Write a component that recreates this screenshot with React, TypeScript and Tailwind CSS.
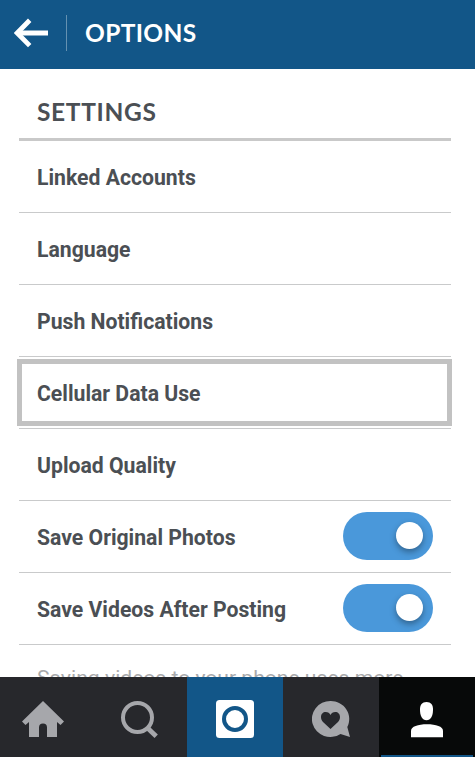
import type { ReactNode } from "react";

interface RowProps {
  label: string;
  toggle?: boolean;
  selected?: boolean;
}

interface TabProps {
  name: string;
  icon: ReactNode;
  className: string;
}

const rows: RowProps[] = [
  { label: "Linked Accounts" },
  { label: "Language" },
  { label: "Push Notifications" },
  { label: "Cellular Data Use", selected: true },
  { label: "Upload Quality" },
  { label: "Save Original Photos", toggle: true },
  { label: "Save Videos After Posting", toggle: true },
];

const BackIcon = () => (
  <svg width="36" height="30" viewBox="0 0 36 30" fill="none" stroke="#fff">
    <path d="M3 15H34" strokeWidth="5" />
    <path d="M15.7 2.2L3.2 15L15.7 27.6" strokeWidth="4.8" />
  </svg>
);

const HomeIcon = () => (
  <svg width="42" height="38" viewBox="0 0 42 38" fill="#a6a7ab">
    <path d="M21 1L42 21.5L38.5 25L35 22V37H25V27.5A4 4 0 0 0 17 27.5V37H7V22L3.5 25L0 21.5Z" />
  </svg>
);

const SearchIcon = () => (
  <svg width="38" height="38" viewBox="0 0 38 38" fill="none" stroke="#a6a7ab">
    <circle cx="17.5" cy="17.5" r="14.5" strokeWidth="4" />
    <path d="M27.5 28L36.2 36.2" strokeWidth="4.8" />
  </svg>
);

const CameraIcon = () => (
  <svg width="38" height="38" viewBox="0 0 38 38">
    <rect width="38" height="38" rx="3.5" fill="#fff" />
    <circle cx="19" cy="19" r="11" fill="none" stroke="#125688" strokeWidth="4" />
  </svg>
);

const ActivityIcon = () => (
  <svg width="38" height="38" viewBox="0 0 38 38">
    <path
      d="M18.5 1A18.4 18 0 1 0 28.5 34L38 37L35.3 27A18.4 18 0 0 0 18.5 1Z"
      fill="#a6a7ab"
    />
    <path
      d="M18.5 29L11 22C9.5 20.3 9 18.8 9 17C9 14 11 12 13.7 12C16 12 17.7 13.2 18.5 15C19.3 13.2 21 12 23.3 12C26 12 28 14 28 17C28 18.8 27.5 20.3 26 22Z"
      fill="#27282c"
    />
  </svg>
);

const ProfileIcon = () => (
  <svg width="32" height="36" viewBox="0 0 32 36" fill="#fff">
    <path d="M15.5 0C20 0 22 2.8 22 7.5C22 14 19.8 18.3 15.5 18.3C11.2 18.3 9 14 9 7.5C9 2.8 11 0 15.5 0Z" />
    <path d="M0 35.3V29C0 24.5 7 22.3 16 22.3S32 24.5 32 29V35.3Z" />
  </svg>
);

const tabs: TabProps[] = [
  { name: "Home", icon: <HomeIcon />, className: "w-[91px] pl-[22px] pt-[23px]" },
  { name: "Search", icon: <SearchIcon />, className: "w-24 pl-[29px] pt-[23px]" },
  { name: "Camera", icon: <CameraIcon />, className: "w-24 bg-[#125688] pl-[29px] pt-[23px]" },
  { name: "Activity", icon: <ActivityIcon />, className: "w-24 pl-[29px] pt-[23px]" },
  { name: "Profile", icon: <ProfileIcon />, className: "w-24 bg-[#070909] pl-8 pt-[25px]" },
];

const Toggle = () => (
  <div className="-mt-0.5 flex h-12 w-[90px] items-center justify-end rounded-full bg-[#4a98da] pr-2.5">
    <div className="-mt-px size-[27px] rounded-full bg-white shadow-[0_3px_6px_rgba(0,0,0,0.35)]" />
  </div>
);

const Row = ({ label, toggle, selected }: RowProps) => (
  <li className="relative flex h-[72px] items-center justify-between border-b border-[#c9cacb] pr-[18px] pl-[18px]">
    <span className="pt-0.5 text-[21.2px] leading-6 font-bold whitespace-nowrap">{label}</span>
    {toggle && <Toggle />}
    {selected && (
      <div className="absolute top-0.5 -right-px bottom-0.5 -left-0.5 border-5 border-[#c2c2c2]" />
    )}
  </li>
);

export default function App() {
  return (
    <div className="flex h-[757px] w-[475px] flex-col overflow-hidden bg-white font-['Roboto',sans-serif] text-[#4b4f54]">
      <header className="flex h-[69px] shrink-0 items-center bg-[#125688] pb-[3px] pl-3.5 text-white">
        <BackIcon />
        <div className="ml-4 h-9 w-px bg-white/35" />
        <h1 className="ml-[18px] font-['Lato',sans-serif] text-[24.5px] leading-8 font-bold tracking-[0.35px]">OPTIONS</h1>
      </header>

      <main className="min-h-0 flex-1 overflow-hidden pr-6 pl-[19px]">
        <h2 className="h-[72px] border-b-3 border-[#c9c9c9] pt-[27px] pl-[18px] font-['Lato',sans-serif] text-[24.5px] leading-8 font-bold tracking-[0.65px]">
          SETTINGS
        </h2>
        <ul>
          {rows.map((row) => (
            <Row key={row.label} {...row} />
          ))}
        </ul>
        <p className="pt-[19px] pl-[18px] text-[21.1px] leading-7 whitespace-nowrap text-[#a9aaac]">
          Saving videos to your phone uses more
        </p>
      </main>

      <nav className="flex h-20 shrink-0 bg-[#27282c]">
        {tabs.map(({ name, icon, className }) => (
          <button key={name} aria-label={name} className={`relative flex shrink-0 items-start ${className}`}>
            {icon}
            {name === "Profile" && (
              <span className="absolute bottom-0 left-0.5 h-0.5 w-[92px] bg-[#125688]" />
            )}
          </button>
        ))}
      </nav>
    </div>
  );
}
